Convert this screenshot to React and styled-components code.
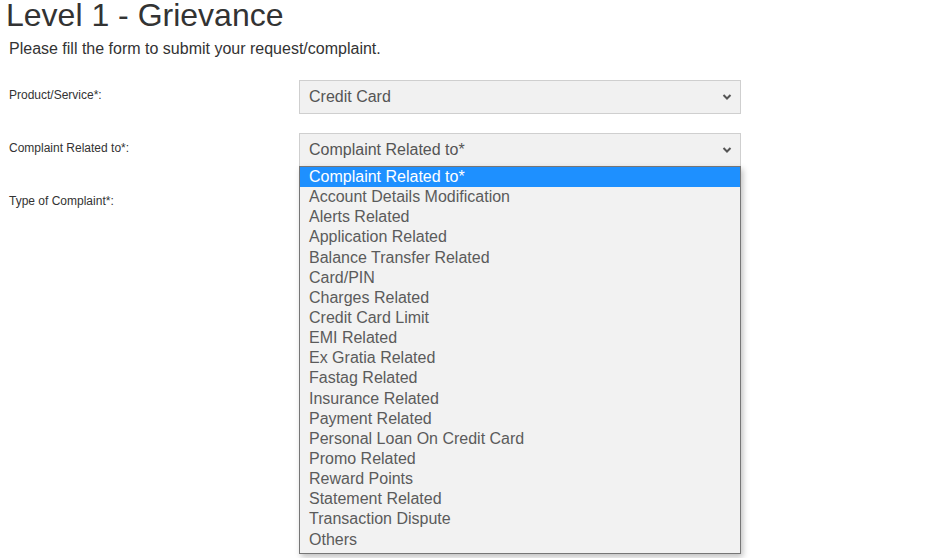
import React from "react"
import styled, { createGlobalStyle } from "styled-components"

const GlobalStyle = createGlobalStyle`
  html, body {
    margin: 0;
    padding: 0;
    background: #ffffff;
    font-family: "Liberation Sans", Arial, sans-serif;
  }
`

const Page = styled.div`
  position: relative;
  width: 951px;
  height: 558px;
  overflow: hidden;
  padding: 0 0 0 6px;
  box-sizing: border-box;
  color: #333;
`

const Title = styled.h1`
  margin: -3px 0 0;
  font-size: 32px;
  font-weight: 400;
  line-height: 36px;
  color: #333;
`

const Intro = styled.p`
  margin: 6px 0 0 3px;
  font-size: 16px;
  line-height: 20px;
  color: #333;
`

const Form = styled.div`
  display: flex;
  flex-direction: column;
  gap: 19px;
  margin-top: 21px;
`

const Row = styled.div`
  display: grid;
  grid-template-columns: 293px 442px;
  align-items: center;
  height: 34px;
`

const Label = styled.label`
  font-size: 12px;
  color: #333;
  padding-left: 3px;
  margin-top: -4px;
`

const SelectWrap = styled.div`
  position: relative;
  height: 34px;
`

const SelectBox = styled.div`
  display: flex;
  align-items: center;
  justify-content: space-between;
  height: 100%;
  box-sizing: border-box;
  border: 1px solid #cfcfcf;
  background: #f1f1f1;
  padding: 0 8px 0 9px;
  font-size: 16px;
  color: #555;
`

const Chevron = () => (
  <svg width="10" height="8" viewBox="0 0 10 8">
    <path d="M1.5 2 L5 5.5 L8.5 2" fill="none" stroke="#555" strokeWidth="2" />
  </svg>
)

const ListBox = styled.ul`
  position: absolute;
  left: 0;
  top: 33px;
  width: 442px;
  margin: 0;
  padding: 0 0 3px;
  list-style: none;
  box-sizing: border-box;
  border: 1px solid #767676;
  background: #f2f2f2;
  box-shadow: 2px 3px 6px rgba(0, 0, 0, 0.25);
  z-index: 2;
`

const Option = styled.li`
  height: 20.15px;
  line-height: 20px;
  padding-left: 9px;
  font-size: 16px;
  color: ${p => (p.$active ? "#fff" : "#5b5b5b")};
  background: ${p => (p.$active ? "#1e90ff" : "transparent")};
`

const options = [
  "Complaint Related to*",
  "Account Details Modification",
  "Alerts Related",
  "Application Related",
  "Balance Transfer Related",
  "Card/PIN",
  "Charges Related",
  "Credit Card Limit",
  "EMI Related",
  "Ex Gratia Related",
  "Fastag Related",
  "Insurance Related",
  "Payment Related",
  "Personal Loan On Credit Card",
  "Promo Related",
  "Reward Points",
  "Statement Related",
  "Transaction Dispute",
  "Others",
]

export default function App() {
  return (
    <>
      <GlobalStyle />
      <Page>
        <Title>Level 1 - Grievance</Title>
        <Intro>Please fill the form to submit your request/complaint.</Intro>
        <Form>
          <Row>
            <Label>Product/Service*:</Label>
            <SelectWrap>
              <SelectBox>
                Credit Card
                <Chevron />
              </SelectBox>
            </SelectWrap>
          </Row>
          <Row>
            <Label>Complaint Related to*:</Label>
            <SelectWrap>
              <SelectBox>
                Complaint Related to*
                <Chevron />
              </SelectBox>
              <ListBox>
                {options.map((o, i) => (
                  <Option key={o} $active={i === 0}>
                    {o}
                  </Option>
                ))}
              </ListBox>
            </SelectWrap>
          </Row>
          <Row>
            <Label>Type of Complaint*:</Label>
            <div />
          </Row>
        </Form>
      </Page>
    </>
  )
}
